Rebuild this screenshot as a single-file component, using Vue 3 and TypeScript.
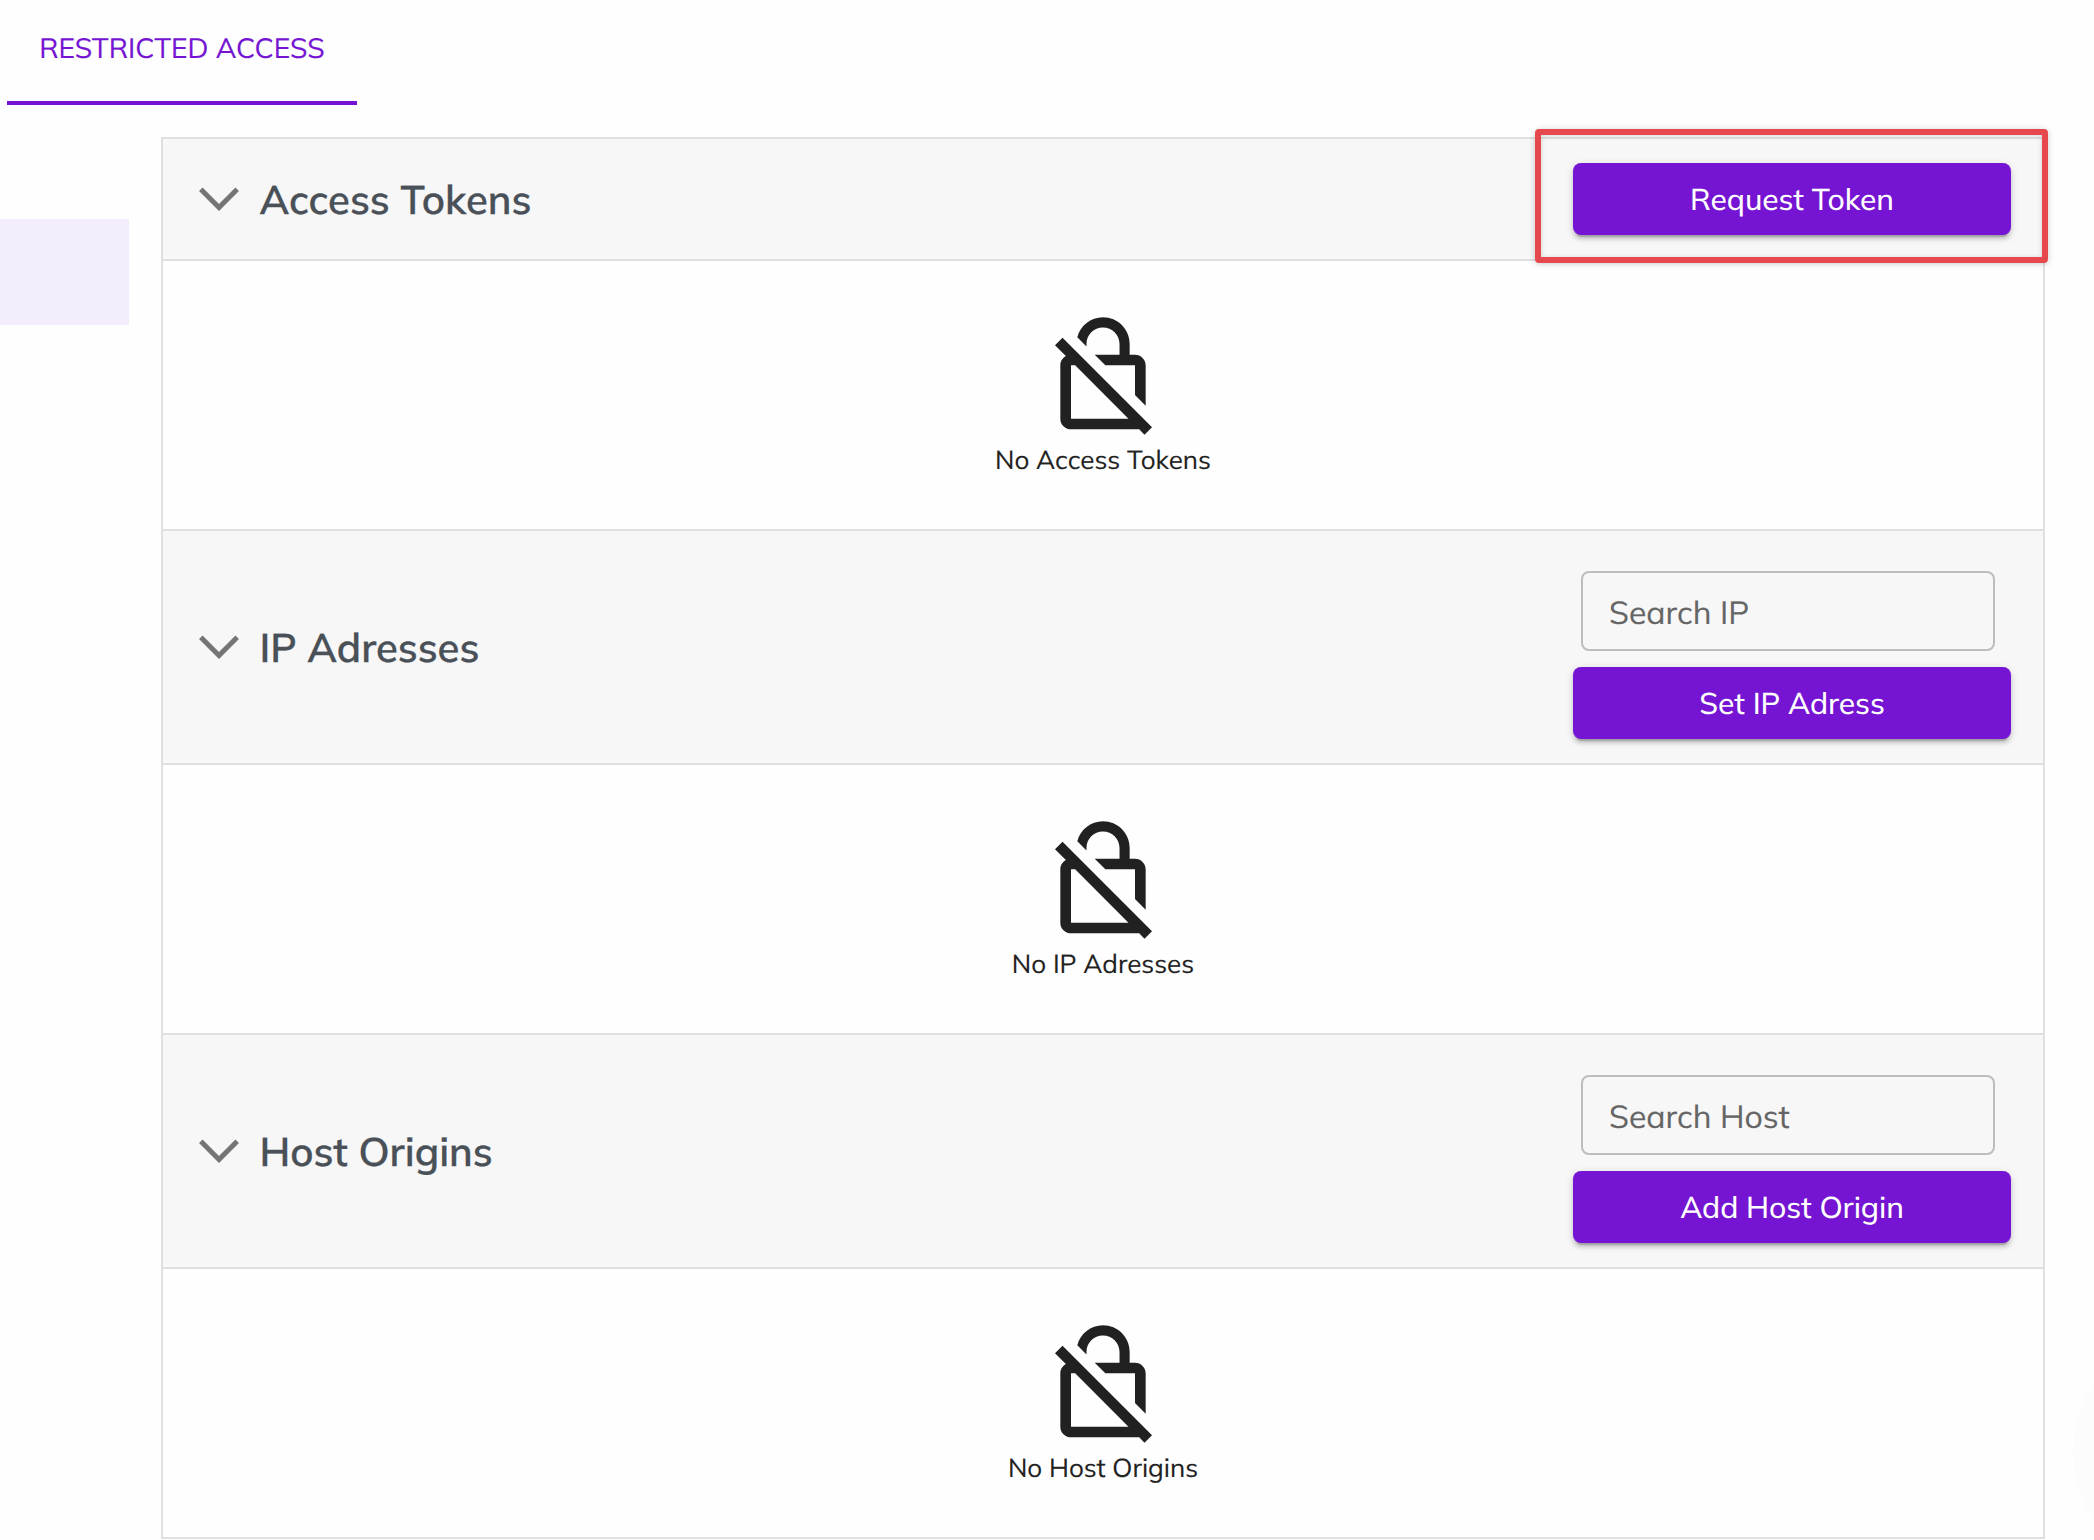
<script setup lang="ts">
interface Section {
  title: string
  action: string
  empty: string
  search?: string
  highlighted?: boolean
}

const sections: Section[] = [
  { title: 'Access Tokens', action: 'Request Token', empty: 'No Access Tokens', highlighted: true },
  { title: 'IP Adresses', action: 'Set IP Adress', empty: 'No IP Adresses', search: 'Search IP' },
  { title: 'Host Origins', action: 'Add Host Origin', empty: 'No Host Origins', search: 'Search Host' },
]
</script>

<template>
  <main class="page">
    <nav class="tabs"><a class="tab">RESTRICTED ACCESS</a></nav>
    <div class="content">
      <aside class="side"><div class="side-item"></div></aside>
      <div class="panel">
        <section v-for="s in sections" :key="s.title" class="section">
          <header class="head" :class="{ tall: s.search }">
            <svg class="chevron" viewBox="0 0 40 24"><path d="M1.8 2.3 20 20.5 38.2 2.3" /></svg>
            <h2 class="title">{{ s.title }}</h2>
            <div class="actions">
              <input v-if="s.search" class="search" type="text" :placeholder="s.search" />
              <button class="btn" type="button">{{ s.action }}</button>
            </div>
            <div v-if="s.highlighted" class="marker"></div>
          </header>
          <div class="body">
            <svg class="lock" viewBox="0 0 24 24">
              <path d="M8.9 6c0-1.71 1.39-3.1 3.1-3.1s3.1 1.39 3.1 3.1v2h-4.66l2 2H18v5.56l2 2V10c0-1.1-.9-2-2-2h-1V6c0-2.76-2.24-5-5-5-2.32 0-4.26 1.59-4.82 3.74L8.9 6.46V6zM4.41 4.81 3 6.22l2.04 2.04C4.42 8.6 4 9.25 4 10v10c0 1.1.9 2 2 2h12.78l1 1 1.41-1.41L4.41 4.81zM6 20V10h.78l10 10H6z" />
            </svg>
            <p class="empty">{{ s.empty }}</p>
          </div>
        </section>
      </div>
    </div>
    <div class="glow"></div>
  </main>
</template>

<style>
body { background: #fefefe; overflow: hidden; }
</style>
<style scoped>
.page { box-sizing: border-box; width: 2094px; height: 1540px; overflow: hidden; position: relative; font-family: Mulish, Lato, sans-serif; text-rendering: geometricPrecision; }
.tabs { display: flex; height: 105px; padding-left: 7px; }
.tab { box-sizing: border-box; width: 350px; border-bottom: 4px solid #7514d2; color: #7514d2; font-size: 28px; line-height: 95px; text-align: center; white-space: nowrap; -webkit-text-stroke: 0.2px #7514d2; }
.content { display: flex; padding-top: 32px; }
.side { width: 161px; padding-top: 82px; }
.side-item { width: 129px; height: 106px; background: #f4edfc; }
.panel { box-sizing: border-box; width: 1884px; border: 2px solid #e0e0e0; }
.section + .section { border-top: 2px solid #e0e0e0; }
.head { position: relative; box-sizing: border-box; height: 122px; padding: 0 32px 0 36px; display: flex; align-items: center; background: #f7f7f7; border-bottom: 2px solid #e0e0e0; }
.head.tall { height: 234px; }
.chevron { width: 40px; height: 24px; flex: none; fill: none; stroke: #757575; stroke-width: 5; }
.title { flex: 1; margin: 0 0 0 20.5px; font-size: 40px; font-weight: 600; color: #495057; line-height: 48px; -webkit-text-stroke: 0.3px #495057; }
.actions { width: 438px; display: flex; flex-direction: column; gap: 16px; }
.tall .actions { padding-top: 16px; }
.search { box-sizing: border-box; height: 80px; margin: 0 16px 0 8px; padding: 1px 26px 0; border: 2px solid #bdbdbd; border-radius: 8px; background: transparent; font: 32px Mulish, Lato, sans-serif; text-rendering: geometricPrecision; }
.search::placeholder { color: #656565; opacity: 1; -webkit-text-stroke: 0.15px #656565; }
.btn { height: 72px; border: 0; border-radius: 8px; background: #7514d2; color: #fff; font: 500 30px Mulish, Lato, sans-serif; letter-spacing: -0.07px; text-rendering: geometricPrecision; box-shadow: 0 6px 2px -4px rgba(0,0,0,.2), 0 4px 4px rgba(0,0,0,.14), 0 2px 10px rgba(0,0,0,.12); }
.marker { position: absolute; box-sizing: border-box; top: -10px; right: -5px; width: 513px; height: 134px; border: 6px solid #e6494d; border-radius: 4px; box-shadow: 0 1px 6px rgba(0,0,0,.2), inset 0 1px 5px rgba(0,0,0,.16); }
.body { height: 268px; box-sizing: border-box; padding-top: 51px; display: flex; flex-direction: column; align-items: center; }
.lock { width: 128px; height: 128px; fill: #212121; }
.empty { margin: 0; font-size: 26px; line-height: 39px; color: #212121; -webkit-text-stroke: 0.15px #212121; }
.glow { position: absolute; left: 2073px; top: 1322px; width: 260px; height: 260px; border-radius: 50%; background: #fcfcfc; }
</style>
